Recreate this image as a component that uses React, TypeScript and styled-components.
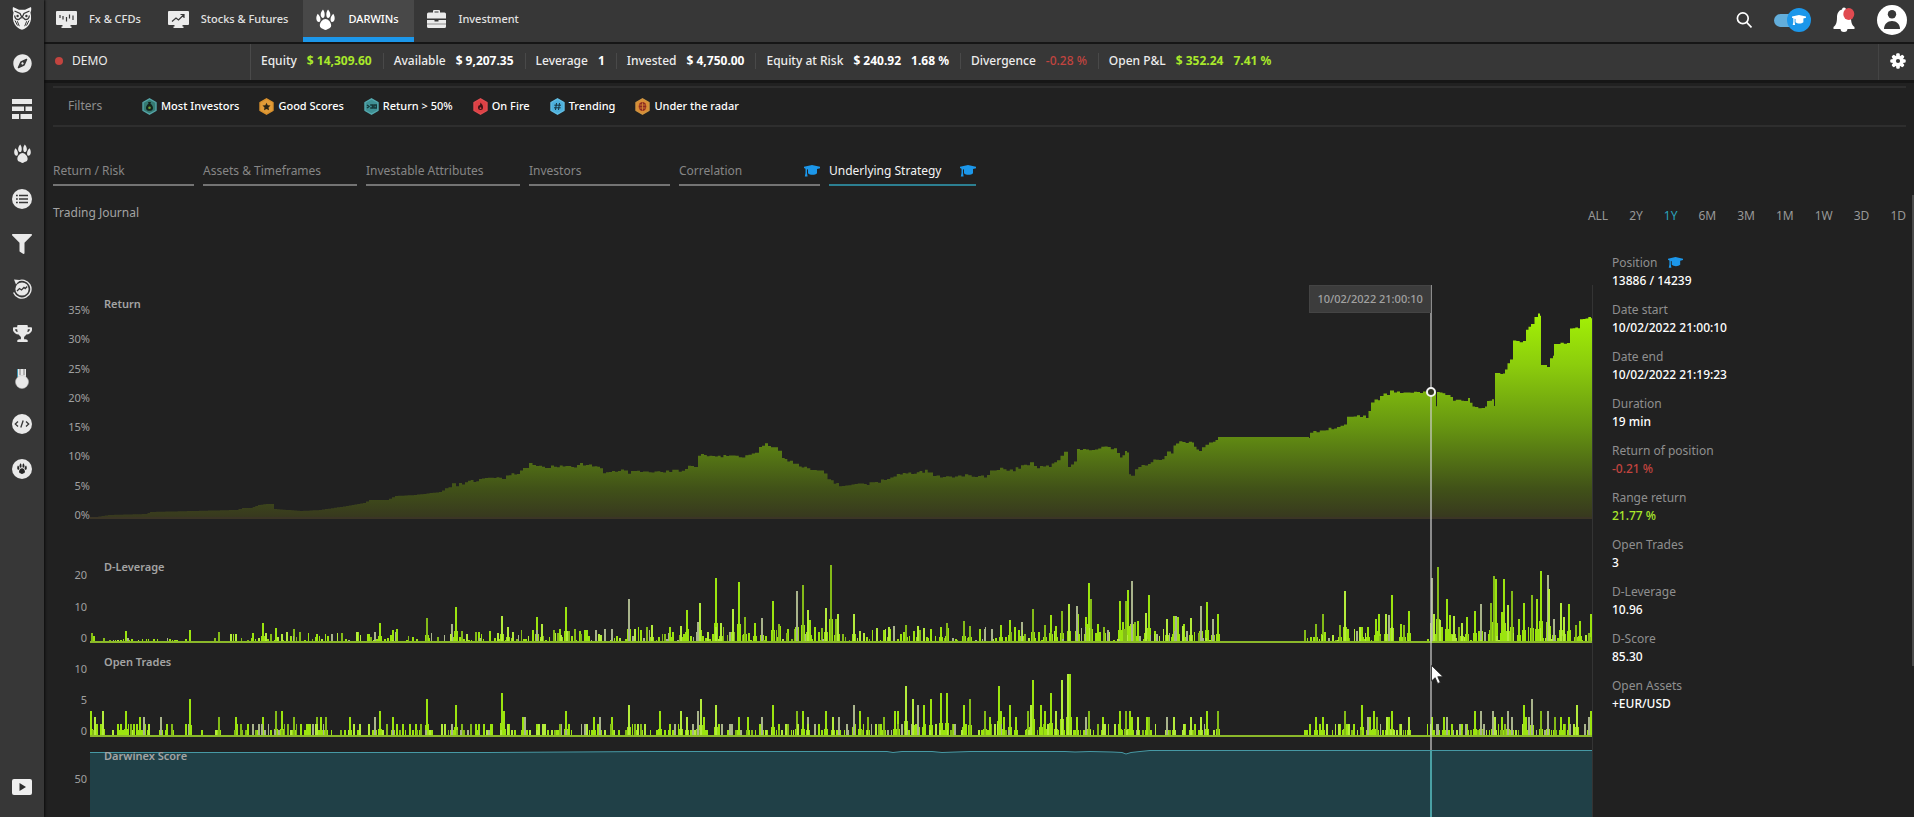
import React from "react";
import styled, { createGlobalStyle, css } from "styled-components";
import { FaCompass, FaFilter, FaTrophy } from "react-icons/fa";

const colors = {
  page: "#212121",
  bar: "#373737",
  edge: "#161616",
  rule: "#2e2e2e",
  text: "#ececec",
  muted: "#8e8e8e",
  green: "#a9e82b",
  red: "#c2443f",
  blue: "#1c97ea",
  teal: "#2ba3bd",
};

const GlobalStyle = createGlobalStyle`
  *, *::before, *::after { box-sizing: border-box; }
  body {
    margin: 0;
    background: ${colors.page};
    color: ${colors.text};
    font-family: "Noto Sans", "Open Sans", sans-serif;
    font-size: 12px;
    line-height: 16px;
  }
  button { font: inherit; color: inherit; background: none; border: 0; padding: 0; cursor: pointer; }
  a { color: inherit; text-decoration: none; }
  svg { display: block; }
`;

/* ---------- shell ---------- */

const Shell = styled.div`
  display: flex;
  height: 100vh;
  overflow: hidden;
`;

const Sidebar = styled.nav`
  display: flex;
  flex-direction: column;
  flex: none;
  width: 44px;
  background: ${colors.bar};
  box-shadow: 1px 0 2px #0c0c0c;
  z-index: 1;
`;

const Logo = styled.a`
  display: flex;
  justify-content: center;
  height: 41px;
  padding-top: 7px;
`;

const SideButton = styled.button<{ $last?: boolean }>`
  display: flex;
  align-items: center;
  justify-content: center;
  height: 45px;
  color: #e9e9e9;
  ${(p) => p.$last && css`margin-top: auto; margin-bottom: 8px;`}
`;

const Main = styled.div`
  display: flex;
  flex-direction: column;
  flex: 1;
  min-width: 0;
`;

/* ---------- top bar ---------- */

const TopBar = styled.header`
  display: flex;
  flex: none;
  height: 44px;
  background: ${colors.bar};
  border-bottom: 2px solid ${colors.edge};
`;

const TopTab = styled.button<{ $active?: boolean }>`
  display: flex;
  align-items: center;
  gap: 12px;
  padding: 0 15px 4px 12px;
  font-size: 11px;
  font-weight: 500;
  color: ${(p) => (p.$active ? "#fff" : "#e2e2e2")};
  ${(p) =>
    p.$active &&
    css`
      background: #484848;
      box-shadow: inset 0 -5px ${colors.blue};
    `}
`;

const Tools = styled.div`
  display: flex;
  align-items: center;
  gap: 22px;
  margin-left: auto;
  padding: 0 7px 2px 0;
`;

const IconButton = styled.button`
  display: flex;
`;

const LearnToggle = styled.label`
  position: relative;
  display: flex;
  align-items: center;
  width: 37px;
  height: 24px;
  cursor: pointer;
  &::before {
    content: "";
    width: 30px;
    height: 13px;
    border-radius: 7px;
    background: #63aedb;
  }
  input { position: absolute; inset: 0; margin: 0; opacity: 0; }
`;

const Knob = styled.span`
  position: absolute;
  right: 0;
  display: flex;
  align-items: center;
  justify-content: center;
  width: 24px;
  height: 24px;
  border-radius: 12px;
  background: ${colors.blue};
  color: #fff;
`;

/* ---------- account bar ---------- */

const AccountBar = styled.section`
  display: flex;
  align-items: center;
  flex: none;
  height: 39px;
  padding-bottom: 3px;
  background: ${colors.bar};
  border-bottom: 3px solid ${colors.edge};
`;

const Account = styled.div`
  display: flex;
  align-items: center;
  gap: 9px;
  align-self: stretch;
  width: 207px;
  margin-bottom: -3px;
  padding: 0 0 3px 11px;
  border-right: 1px solid #4a4a4a;
`;

const Dot = styled.span`
  width: 8px;
  height: 8px;
  border-radius: 4px;
  background: ${colors.red};
`;

type Tone = "plain" | "up" | "down";
const toneColor = { plain: "#fff", up: colors.green, down: colors.red };

const Stats = styled.dl`
  display: flex;
  margin: 0;
`;

const Stat = styled.div`
  display: flex;
  gap: 10px;
  padding: 0 11px 0 10px;
  & + & { border-left: 1px solid #494949; }
  dt { font-weight: 500; }
  dd { margin: 0; }
`;

const StatValue = styled.dd<{ $tone: Tone }>`
  font-weight: ${(p) => (p.$tone === "down" ? 500 : 700)};
  color: ${(p) => toneColor[p.$tone]};
`;

const SettingsBox = styled.div`
  display: flex;
  align-items: center;
  justify-content: center;
  align-self: stretch;
  width: 36px;
  margin: 0 0 -3px auto;
  padding: 0 0 3px 3px;
  border-left: 1px solid #444;
`;

/* ---------- filters and section tabs ---------- */

const Content = styled.main`
  position: relative;
  display: flex;
  flex-direction: column;
  flex: 1;
  min-height: 0;
  padding: 3px 8px 0 9px;
`;

const Scroll = styled.span`
  position: absolute;
  top: 112px;
  right: 0;
  width: 2px;
  height: 471px;
  background: #4a4a4a;
`;

const Filters = styled.section`
  display: flex;
  align-items: center;
  gap: 20px;
  flex: none;
  height: 41px;
  padding: 0 0 1px 15px;
  border: solid ${colors.rule};
  border-width: 2px 0;
`;

const FiltersLabel = styled.span`
  width: 54px;
  color: ${colors.muted};
`;

const Chip = styled.button`
  display: flex;
  align-items: center;
  gap: 4px;
  font-size: 11px;
  font-weight: 500;
  color: #fff;
`;

const SectionTabs = styled.nav`
  display: flex;
  gap: 9px;
  flex: none;
  margin-top: 34px;
`;

const SectionTab = styled.button<{ $active?: boolean; $wide?: boolean }>`
  display: flex;
  align-items: center;
  justify-content: space-between;
  width: ${(p) => (p.$active ? 147 : p.$wide ? 154 : 141)}px;
  height: 25px;
  padding-bottom: 3px;
  border-bottom: 2px solid ${(p) => (p.$active ? "#2c7f91" : "#747474")};
  color: ${(p) => (p.$active ? "#f4f4f4" : "#868686")};
  svg { color: ${colors.blue}; }
`;

const JournalHead = styled.div`
  display: flex;
  align-items: center;
  justify-content: space-between;
  flex: none;
  margin-top: 16px;
  height: 22px;
`;

const JournalTitle = styled.h2`
  margin: 0;
  font-size: 12px;
  font-weight: 400;
  color: #a3a3a3;
`;

const Ranges = styled.div`
  display: flex;
  gap: 21px;
  align-self: flex-end;
`;

const Range = styled.button<{ $active?: boolean }>`
  color: ${(p) => (p.$active ? colors.teal : "#989898")};
`;

/* ---------- journal body ---------- */

const Journal = styled.div`
  display: flex;
  flex: 1;
  min-height: 0;
  margin-top: 30px;
`;

const Charts = styled.div`
  position: relative;
  display: flex;
  flex-direction: column;
  flex: 1;
  min-width: 0;
  margin-top: 31px;
  border-right: 1px solid #343434;
`;

const Panel = styled.section<{ $height?: number }>`
  display: flex;
  ${(p) => (p.$height ? css`flex: none; height: ${p.$height}px;` : css`flex: 1; min-height: 60px;`)}
`;

const Axis = styled.div<{ $top: number; $bottom?: number; $inset?: number }>`
  display: flex;
  flex-direction: column;
  justify-content: space-between;
  align-items: flex-end;
  flex: none;
  width: 37px;
  padding: ${(p) => `${p.$top}px ${p.$inset ?? 3}px ${p.$bottom ?? 0}px 0`};
  font-size: 11px;
  line-height: 10px;
  color: #a0a0a0;
`;

const Plot = styled.div`
  position: relative;
  flex: 1;
  min-width: 0;
  svg { width: 100%; }
`;

const PlotTitle = styled.h3<{ $top: number }>`
  position: absolute;
  top: ${(p) => p.$top}px;
  left: 14px;
  margin: 0;
  font-size: 11px;
  font-weight: 600;
  line-height: 14px;
  color: #a4a4a4;
`;

const ScorePlot = styled(Plot)`
  display: flex;
  flex-direction: column;
  padding-top: 12px;
  &::after { content: ""; flex: 1; background: #204047; }
`;

const Overlay = styled.div`
  position: absolute;
  inset: 0 0 0 37px;
  pointer-events: none;
`;

const Crosshair = styled.div`
  position: absolute;
  top: 0;
  bottom: 0;
  left: 89.2%;
  width: 2px;
  background: linear-gradient(rgba(205, 205, 205, 0.62) 465px, #4aa0a4 465px);
`;

const Tooltip = styled.div`
  position: absolute;
  top: 0;
  right: 1px;
  padding: 5px 7px;
  background: #3c3c3c;
  border: 1px solid #444;
  line-height: 16px;
  font-size: 11px;
  font-weight: 500;
  white-space: nowrap;
  color: #a2a2a2;
`;

const Marker = styled.span`
  position: absolute;
  top: 102px;
  left: -4px;
  width: 10px;
  height: 10px;
  border: 2px solid #f4f4f4;
  border-radius: 5px;
  background: #30341f;
`;

const Cursor = styled.svg`
  position: absolute;
  top: 380px;
  left: 1px;
`;

const Details = styled.dl`
  flex: none;
  width: 313px;
  margin: 0;
  padding-left: 19px;
`;

const Detail = styled.div`
  height: 47px;
  dt { display: flex; align-items: center; gap: 11px; height: 18px; color: #8f8f8f; }
  dt svg { color: ${colors.blue}; }
  dd { margin: 0; height: 18px; line-height: 18px; }
`;

const DetailValue = styled.dd<{ $tone: Tone }>`
  font-weight: 500;
  color: ${(p) => toneColor[p.$tone]};
`;

/* ---------- icons ---------- */

const OwlLogo = () => (
  <svg width="20" height="23" viewBox="0 0 20 23">
    <path fill="#f1f1f1" d="M1 0l6 2.800h6L19 0c.5 2 .3 4-.6 5.500 1.200 4.500.9 8.500-1.200 12-1.600 2.600-4.200 4.500-7.200 5.300-3-.8-5.600-2.700-7.200-5.300C.7 14 .4 10 1.600 5.500.7 4 .5 2 1 0z" />
    <path fill="none" stroke="#373737" strokeWidth="1.300" d="M2.500 4l5.500 2.500 2 4 2-4L17.500 4M2.600 8.500c.4 3.500 2.400 4.500 4.600 3.800L9 10.500M17.400 8.500c-.4 3.500-2.400 4.500-4.600 3.800L11 10.500" />
    <path fill="none" stroke="#373737" strokeWidth="1" d="M3 13.500l2.500 5M5.300 14.200l2 5M17 13.500l-2.500 5M14.700 14.200l-2 5" />
    <circle cx="5.600" cy="9" r="1.200" fill="#373737" />
    <circle cx="14.400" cy="9" r="1.200" fill="#373737" />
  </svg>
);

const CapIcon = ({ size = 16 }: { size?: number }) => (
  <svg width={size} height={(size * 3) / 4} viewBox="0 0 16 12">
    <path fill="currentColor" d="M8 0l8 1.800v1.400L13 4v4.300c-2 2-7 2-9 0V4.600L3 4.300V8l.6 3.500H.8L1.500 8V3.800L0 3V1.800z" />
  </svg>
);

const GearIcon = () => (
  <svg width="16" height="16" viewBox="0 0 16 16">
    <g fill="#fff">
      {[0, 45, 90, 135].map((angle) => (
        <rect key={angle} x="6.200" y="0.300" width="3.600" height="15.400" rx="1.200" transform={`rotate(${angle} 8 8)`} />
      ))}
      <circle cx="8" cy="8" r="5.800" />
    </g>
    <circle cx="8" cy="8" r="2.100" fill="#373737" />
  </svg>
);

const BricksIcon = () => (
  <svg width="20" height="20" viewBox="0 0 20 20" fill="currentColor">
    <path d="M0 0h20v5H0zM0 7.500h12V12H0zM13.500 7.500H20V12h-6.500zM0 15h7v5H0zM8.500 15H20v5H8.500z" />
  </svg>
);

const pawShape =
  "M10 9.500c2.600 0 5.400 3.300 5.400 6.200 0 1.700-1.200 2.600-2.600 3-.9.300-1.700 1.200-2.800 1.200s-1.900-.9-2.800-1.200c-1.400-.4-2.600-1.300-2.600-3 0-2.900 2.800-6.200 5.400-6.200zM7.600.5c1.200 1.600 1.700 3.200 1.600 5.200C9.100 7.400 8.500 8.500 7.500 8.500S5.400 7.300 5.400 5.500c0-2 .9-3.500 2.200-5zM12.400.5c1.300 1.500 2.200 3 2.200 5 0 1.800-1.100 3-2.100 3s-1.600-1.100-1.700-2.800c-.1-2 .4-3.600 1.600-5.200zM2.600 4.500c1.500 1.500 2.500 3 2.600 5 .1 1.700-.4 2.700-1.300 2.900-1.200.2-2.400-1.100-2.600-2.900-.2-1.900.3-3.500 1.300-5zM17.400 4.500c1 1.500 1.500 3.100 1.300 5-.2 1.800-1.400 3.100-2.600 2.900-.9-.2-1.400-1.200-1.300-2.900.1-2 1.100-3.500 2.600-5z";

const PawIcon = ({ size = 20 }: { size?: number }) => (
  <svg width={size} height={size} viewBox="0 0 20 20">
    <path fill="currentColor" d={pawShape} />
  </svg>
);

const ListIcon = () => (
  <svg width="20" height="20" viewBox="0 0 20 20">
    <circle cx="10" cy="10" r="10" fill="currentColor" />
    <path stroke="#373737" strokeWidth="1.400" d="M4 6.500h1.800M7 6.500h9M4 10h1.800M7 10h9M4 13.500h1.800M7 13.500h9" />
  </svg>
);

const HistoryChartIcon = () => (
  <svg width="20" height="20" viewBox="0 0 20 20">
    <circle cx="10" cy="10" r="6.600" fill="currentColor" />
    <path fill="none" stroke="currentColor" strokeWidth="1.400" d="M5 2.600A9 9 0 1 1 1.600 13.500" />
    <path fill="currentColor" d="M2 .5l5.500.5-3.500 4.500z" />
    <path fill="none" stroke="#373737" strokeWidth="1.300" d="M5 12l2.500-2.500 2 1.500L12 8.500l1.200 1 2-2" />
  </svg>
);

const MedalIcon = () => (
  <svg width="14" height="20" viewBox="0 0 14 20">
    <path fill="#3d98b5" d="M2 0h1.500v8H2z" />
    <path fill="currentColor" d="M3 0h8v8H3z" />
    <path stroke="#7d7d7d" d="M5 0v6M9 0v6" />
    <circle cx="7" cy="13" r="6.500" fill="currentColor" stroke="#bdbdbd" strokeWidth=".5" />
  </svg>
);

const CodeIcon = () => (
  <svg width="20" height="20" viewBox="0 0 20 20">
    <circle cx="10" cy="10" r="10" fill="currentColor" />
    <path fill="none" stroke="#373737" strokeWidth="1.300" d="M6 7.500L3.300 10 6 12.500M14 7.500l2.700 2.500-2.700 2.500M11.200 6.500l-2.400 7" />
  </svg>
);

const PawBadgeIcon = () => (
  <svg width="20" height="20" viewBox="0 0 20 20">
    <circle cx="10" cy="10" r="10" fill="currentColor" />
    <path fill="#262626" transform="translate(4.500 4) scale(.55)" d={pawShape} />
  </svg>
);

const PlayIcon = () => (
  <svg width="20" height="16" viewBox="0 0 20 16">
    <rect width="20" height="16" rx="2" fill="#efefef" />
    <path fill="#2e2e2e" d="M7.500 4l6.500 4-6.500 4z" />
  </svg>
);

const MonitorFrame = ({ children }: { children: React.ReactNode }) => (
  <svg width="21" height="17" viewBox="0 0 21 17">
    <path fill="#ebebeb" d="M1 0h19a1 1 0 0 1 1 1v12a1 1 0 0 1-1 1h-5.500v1.600h1V17h-10v-1.400h1V14H1a1 1 0 0 1-1-1V1a1 1 0 0 1 1-1z" />
    {children}
  </svg>
);

const FxIcon = () => (
  <MonitorFrame>
    <path stroke="#373737" strokeWidth="1.200" d="M4 4v3M7 5v3.500M10.500 6v4.500M13.500 3.500v4M17 4.500v4.500" />
  </MonitorFrame>
);

const StocksIcon = () => (
  <MonitorFrame>
    <path fill="none" stroke="#373737" strokeWidth="1.200" d="M4 10.500l4-3.500 2.500 2L15.500 4M12.500 3.500h3.500V7" />
  </MonitorFrame>
);

const BriefcaseIcon = () => (
  <svg width="21" height="18" viewBox="0 0 21 18">
    <path fill="#ebebeb" d="M7 2.500V1a1 1 0 0 1 1-1h5a1 1 0 0 1 1 1v1.500h4.500A1.500 1.500 0 0 1 20 4v4.500H1V4a1.500 1.500 0 0 1 1.500-1.500zm1.500 0h4v-1h-4zM1 10h7.500v1.500h4V10H20v6.500a1.500 1.500 0 0 1-1.500 1.500h-16A1.500 1.500 0 0 1 1 16.500z" />
    <path stroke="#8d8d8d" d="M1 14h19" />
  </svg>
);

const SearchIcon = () => (
  <svg width="16" height="16" viewBox="0 0 16 16" fill="none" stroke="#fff" strokeWidth="1.700">
    <circle cx="6.800" cy="6.300" r="5.400" />
    <path d="M10.500 10.200l5 5.200" />
  </svg>
);

const BellIcon = () => (
  <svg width="22" height="26" viewBox="0 0 22 26">
    <path fill="#fff" d="M9 2.500a2 2 0 0 1 4 0c3.500 1 5 4 5 8 0 5 1 7.500 3.500 9.500v2h-21v-2C3 18 4 15.500 4 10.500c0-4 1.500-7 5-8zM7.500 21.500h7a3.500 3.500 0 0 1-7 0z" />
    <ellipse cx="15.800" cy="7" rx="5.500" ry="6" fill="#e04a50" />
  </svg>
);

const AvatarIcon = () => (
  <svg width="30" height="30" viewBox="0 0 30 30">
    <circle cx="15" cy="15" r="15" fill="#fff" />
    <circle cx="15" cy="9.200" r="4.200" fill="#373737" />
    <path fill="#373737" d="M7 24c0-5 3.500-8 8-8s8 3 8 8z" />
  </svg>
);

const Hex = ({ fill, rim, children }: { fill: string; rim: string; children: React.ReactNode }) => (
  <svg width="15" height="17" viewBox="0 0 15 17">
    <path d="M7.500.8l6.500 3.700v8L7.500 16.200 1 12.500v-8z" fill={fill} stroke={rim} strokeWidth="1.400" strokeLinejoin="round" />
    {children}
  </svg>
);

const chips = [
  {
    label: "Most Investors",
    icon: (
      <Hex fill="#357a72" rim="#55a5a8">
        <path fill="#14231c" d="M6 4h3l-.6 1.600C10.500 7 11 9 11 10.200c0 1.600-1.500 2.600-3.500 2.600S4 11.800 4 10.200C4 9 4.500 7 6.600 5.600z" />
        <circle cx="7.500" cy="9.700" r="1.300" fill="#6f9f35" />
      </Hex>
    ),
  },
  {
    label: "Good Scores",
    icon: (
      <Hex fill="#e09b38" rim="#d8902c">
        <path fill="#2a2416" d="M7.500 4.700l1.200 2.500 2.800.4-2 1.900.5 2.800-2.500-1.300-2.500 1.300.5-2.800-2-1.900 2.800-.4z" />
      </Hex>
    ),
  },
  {
    label: "Return > 50%",
    icon: (
      <Hex fill="#3f9094" rim="#55aab0">
        <path fill="none" stroke="#16383a" strokeWidth="1.400" d="M3 7l2 1.500L3 10M6.200 7h2.300v3H6.200M10 7h2.300v3H10z" />
      </Hex>
    ),
  },
  {
    label: "On Fire",
    icon: (
      <Hex fill="#dd4145" rim="#e04c50">
        <path fill="#3a1416" d="M7.500 4.500c2 2 2.500 3.300 2.500 5a2.500 2.500 0 0 1-5 0c0-1 .5-1.800 1.200-2.400.4.900.8.900 1.300-2.600z" />
        <circle cx="7.500" cy="10.200" r=".9" fill="#dd4145" />
      </Hex>
    ),
  },
  {
    label: "Trending",
    icon: (
      <Hex fill="#4db0dc" rim="#62bde3">
        <path stroke="#17323e" d="M6.500 5l-1 7M9.500 5l-1 7M4.300 7.200h6.700M4 9.800h6.700" />
      </Hex>
    ),
  },
  {
    label: "Under the radar",
    icon: (
      <Hex fill="#d98c35" rim="#cf9440">
        <ellipse cx="7.500" cy="8.500" rx="3.800" ry="4.500" fill="#8e2b22" />
        <path stroke="#d98c35" strokeWidth=".8" d="M7.500 4.500v8M4.500 7h6M4.500 10h6" />
      </Hex>
    ),
  },
];

/* ---------- chart data ---------- */

const PLOT_W = 1502;
const PLOT_X = 90;

const makeRandom = (seed: number) => () => {
  seed = (seed * 1664525 + 1013904223) % 4294967296;
  return seed / 4294967296;
};

// Return curve: horizontal position, vertical position
const returnCurve = [
  90, 519, 95, 517, 108, 515, 145, 514, 150, 512, 190, 511, 235, 510, 242, 508, 250, 508, 258, 505, 266, 504, 272, 504,
  274, 509, 300, 511, 319, 510, 346, 506, 363, 503, 369, 500, 386, 500, 395, 496, 414, 495, 439, 492, 445, 489, 452, 483,
  456, 485, 468, 482, 479, 479, 491, 477, 502, 478, 506, 476, 517, 473, 523, 469, 529, 464, 536, 466, 542, 468, 557, 466,
  574, 467, 580, 464, 592, 465, 600, 469, 603, 472, 618, 472, 624, 470, 628, 473, 637, 470, 643, 472, 666, 471, 685, 470,
  688, 467, 694, 466, 698, 455, 704, 455, 715, 457, 729, 455, 742, 458, 755, 452, 759, 446, 765, 444, 771, 447, 778, 450,
  782, 457, 790, 462, 799, 465, 807, 469, 820, 469, 824, 475, 831, 481, 839, 485, 864, 485, 875, 482, 887, 479, 900, 474,
  914, 473, 925, 471, 933, 475, 940, 477, 958, 477, 965, 474, 975, 477, 984, 476, 990, 472, 1000, 469, 1013, 470,
  1021, 466, 1030, 463, 1034, 467, 1049, 467, 1057, 459, 1064, 453, 1068, 466, 1074, 463, 1077, 449, 1089, 450,
  1095, 448, 1114, 448, 1117, 452, 1120, 457, 1125, 452, 1127, 452, 1129, 475, 1131, 477, 1135, 468, 1148, 463,
  1156, 460, 1162, 458, 1167, 452, 1171, 452, 1176, 442, 1192, 442, 1194, 446, 1199, 451, 1202, 448, 1209, 443,
  1213, 442, 1218, 437, 1309, 437, 1310, 433, 1323, 430, 1337, 427, 1344, 425, 1347, 418, 1357, 416, 1366, 417,
  1371, 402, 1378, 400, 1380, 395, 1387, 394, 1390, 391, 1394, 393, 1400, 392, 1407, 394, 1414, 392, 1435, 392,
  1436, 406, 1437, 393, 1448, 394, 1453, 401, 1464, 400, 1468, 397, 1470, 402, 1475, 408, 1485, 407, 1487, 402,
  1492, 398, 1494, 407, 1495, 373, 1503, 375, 1505, 370, 1510, 358, 1513, 342, 1523, 341, 1526, 330, 1531, 323,
  1538, 313, 1540, 315, 1541, 365, 1547, 368, 1550, 357, 1553, 355, 1554, 345, 1567, 342, 1570, 330, 1578, 327,
  1580, 320, 1591, 318, 1592, 318,
];

const buildReturnPath = () => {
  const rnd = makeRandom(7);
  let d = "M0 234";
  for (let i = 0; i + 3 < returnCurve.length; i += 2) {
    const [x0, y0, x1, y1] = returnCurve.slice(i, i + 4);
    const steps = Math.max(1, Math.round((x1 - x0) / 3));
    for (let s = 0; s < steps; s++) {
      const x = x0 + ((x1 - x0) * s) / steps - PLOT_X;
      const calm = x0 < 440 || (y0 === y1 && x1 - x0 > 60);
      const y = y0 + ((y1 - y0) * s) / steps - 285 + (calm ? 0 : (rnd() - 0.5) * 3);
      d += `H${x.toFixed(1)}V${y.toFixed(1)}`;
    }
  }
  return d + `H${PLOT_W}V234Z`;
};

// Leverage peaks: horizontal position, height
const leveragePeaks = [
  91, 9, 93, 6, 125, 11, 189, 12, 218, 10, 235, 8, 252, 9, 262, 19, 265, 9, 275, 14, 281, 8, 293, 13, 299, 10, 316, 8,
  356, 10, 368, 8, 374, 10, 379, 19, 392, 12, 396, 13, 426, 24, 451, 18, 455, 35, 461, 11, 478, 10, 489, 11, 501, 26,
  507, 15, 512, 10, 536, 25, 541, 18, 553, 12, 559, 13, 565, 35, 579, 11, 586, 12, 595, 12, 604, 13, 611, 13, 628, 43,
  634, 13, 651, 17, 669, 15, 680, 16, 686, 32, 697, 20, 699, 39, 715, 64, 720, 19, 732, 33, 738, 60, 744, 25, 754, 19,
  761, 24, 772, 41, 778, 18, 787, 13, 796, 51, 802, 57, 807, 32, 809, 22, 821, 14, 825, 34, 830, 77, 835, 23, 837, 28,
  853, 28, 859, 11, 883, 12, 888, 15, 905, 17, 917, 16, 923, 14, 930, 13, 940, 15, 946, 19, 963, 21, 969, 16, 984, 13,
  1000, 17, 1009, 22, 1021, 20, 1032, 33, 1044, 17, 1050, 27, 1055, 16, 1061, 31, 1068, 38, 1076, 36, 1077, 28,
  1085, 25, 1088, 59, 1090, 43, 1097, 18, 1119, 41, 1122, 20, 1125, 41, 1127, 52, 1131, 61, 1134, 20, 1137, 21,
  1145, 29, 1148, 47, 1154, 11, 1166, 23, 1173, 26, 1175, 26, 1177, 25, 1183, 18, 1190, 24, 1200, 36, 1206, 40,
  1212, 23, 1217, 28, 1304, 12, 1315, 18, 1322, 28, 1339, 17, 1344, 51, 1347, 13, 1361, 15, 1367, 15, 1375, 23,
  1378, 28, 1385, 28, 1388, 27, 1391, 47, 1400, 18, 1403, 17, 1408, 31, 1431, 64, 1433, 28, 1437, 75, 1439, 22,
  1446, 43, 1449, 27, 1453, 26, 1461, 19, 1466, 25, 1474, 31, 1480, 38, 1490, 39, 1493, 66, 1495, 63, 1501, 30,
  1503, 63, 1507, 37, 1511, 51, 1518, 23, 1523, 39, 1531, 47, 1536, 43, 1540, 71, 1547, 67, 1548, 53, 1553, 23,
  1560, 39, 1563, 25, 1568, 38, 1575, 17, 1579, 21, 1588, 9, 1590, 28,
];

// Open trades peaks: horizontal position, number of trades
const tradePeaks = [
  90, 4, 94, 3, 102, 4, 117, 2, 125, 4, 133, 2, 139, 3, 143, 3, 148, 2, 160, 3, 166, 2, 171, 2, 185, 2, 189, 6, 218, 3,
  235, 3, 240, 2, 252, 2, 258, 2, 262, 3, 275, 4, 281, 4, 287, 2, 293, 3, 306, 2, 312, 2, 316, 3, 320, 3, 325, 3,
  349, 3, 368, 2, 374, 3, 379, 4, 392, 3, 396, 2, 415, 2, 420, 2, 426, 6, 444, 2, 451, 2, 455, 5, 461, 2, 470, 2,
  478, 2, 483, 2, 490, 2, 501, 7, 503, 4, 507, 2, 522, 3, 524, 3, 536, 2, 543, 2, 559, 2, 565, 4, 586, 2, 593, 3,
  599, 3, 611, 3, 628, 5, 634, 2, 644, 2, 659, 4, 669, 2, 674, 2, 680, 4, 686, 3, 692, 2, 697, 4, 700, 6, 703, 3,
  715, 5, 729, 2, 738, 3, 747, 3, 761, 3, 772, 5, 778, 2, 796, 4, 802, 4, 807, 3, 825, 4, 832, 3, 838, 3, 846, 2,
  853, 5, 859, 4, 867, 3, 875, 2, 883, 3, 894, 4, 897, 4, 905, 8, 912, 6, 917, 5, 923, 5, 930, 6, 940, 7, 946, 7,
  952, 2, 963, 5, 969, 6, 984, 4, 989, 3, 998, 8, 1000, 4, 1003, 3, 1009, 5, 1015, 3, 1027, 4, 1030, 5, 1032, 9,
  1040, 5, 1044, 4, 1050, 7, 1055, 4, 1061, 9, 1067, 10, 1069, 10, 1076, 3, 1085, 3, 1088, 4, 1097, 2, 1102, 3,
  1114, 2, 1119, 4, 1125, 4, 1129, 4, 1131, 3, 1137, 3, 1146, 3, 1148, 3, 1166, 3, 1173, 3, 1183, 2, 1190, 3,
  1194, 2, 1200, 3, 1206, 4, 1217, 4, 1304, 1, 1309, 2, 1315, 3, 1322, 3, 1339, 2, 1344, 4, 1346, 2, 1361, 5,
  1367, 3, 1369, 3, 1373, 4, 1376, 3, 1386, 3, 1388, 3, 1391, 4, 1400, 2, 1408, 3, 1431, 3, 1437, 2, 1443, 3,
  1446, 3, 1451, 2, 1461, 2, 1466, 2, 1474, 4, 1480, 4, 1483, 2, 1492, 4, 1494, 3, 1501, 3, 1507, 4, 1511, 3,
  1523, 5, 1525, 3, 1528, 3, 1531, 6, 1540, 4, 1547, 4, 1554, 3, 1560, 3, 1568, 3, 1573, 2, 1576, 5, 1588, 3, 1590, 4,
];

const barColors = ["#9be40f", "#84bb18", "#a9b48c", "#b4ec3c"];

const buildBars = (peaks: number[], unit: number, base: number, seed: number, floor: (x: number, r: number) => number) => {
  const rnd = makeRandom(seed);
  const paths = barColors.map(() => "");
  const add = (x: number, h: number, w: number) => {
    const r = rnd();
    const tone = r < 0.5 ? 0 : r < 0.68 ? 1 : r < 0.8 ? 2 : 3;
    paths[tone] += `M${x - PLOT_X} ${base}v${-Math.round(h)}h${w}V${base}z`;
  };
  for (let x = 92; x < 1590; x += 2 + Math.floor(rnd() * 3)) {
    const quiet = (x > 1217 && x < 1304) || (x > 1409 && x < 1426) || (x > 190 && x < 233 && rnd() > 0.25);
    const h = floor(x, rnd());
    if (!quiet && h > 0) add(x, h, rnd() < 0.4 ? 1 : 2);
  }
  for (let i = 0; i < peaks.length; i += 2) {
    const h = peaks[i + 1] * unit;
    add(peaks[i], h, 2);
    if (h > 14) paths[0] += `M${peaks[i] - PLOT_X - 1} ${base}v${-Math.round(h * 0.3)}h4V${base}z`;
  }
  return paths;
};

const leverageBars = buildBars(leveragePeaks, 1, 97, 21, (x, r) => {
  const cap = x < 230 ? 3 : x < 440 ? 9 : x < 620 ? 12 : 15;
  return r * r * cap + 1;
});

const tradeBars = buildBars(tradePeaks, 6.2, 93, 58, (x, r) => {
  const busy = x < 230 ? 0.45 : 0.75;
  return r > busy ? 0 : r < 0.25 ? 12 : 6;
});

const Bars = ({ paths, height }: { paths: string[]; height: number }) => (
  <svg height={height} viewBox={`0 0 ${PLOT_W} ${height}`} preserveAspectRatio="none" shapeRendering="crispEdges">
    {paths.map((d, i) => (
      <path key={barColors[i]} d={d} fill={barColors[i]} />
    ))}
    <path d={`M0 ${height - 2}h${PLOT_W}v2H0z`} fill="#8bb82a" />
  </svg>
);

const returnPath = buildReturnPath();

/* ---------- page data ---------- */

const sideItems = [
  ["Explore", <FaCompass size={19} />],
  ["Portfolio", <BricksIcon />],
  ["Darwins", <PawIcon size={19} />],
  ["Lists", <ListIcon />],
  ["Filter", <FaFilter size={20} />],
  ["History", <HistoryChartIcon />],
  ["Ranking", <FaTrophy size={19} />],
  ["Awards", <MedalIcon />],
  ["API", <CodeIcon />],
  ["Community", <PawBadgeIcon />],
] as const;

const topTabs = [
  { label: "Fx & CFDs", icon: <FxIcon /> },
  { label: "Stocks & Futures", icon: <StocksIcon /> },
  { label: "DARWINs", icon: <PawIcon size={21} />, active: true },
  { label: "Investment", icon: <BriefcaseIcon /> },
];

const stats: { label: string; values: string[]; tone: Tone }[] = [
  { label: "Equity", values: ["$ 14,309.60"], tone: "up" },
  { label: "Available", values: ["$ 9,207.35"], tone: "plain" },
  { label: "Leverage", values: ["1"], tone: "plain" },
  { label: "Invested", values: ["$ 4,750.00"], tone: "plain" },
  { label: "Equity at Risk", values: ["$ 240.92", "1.68 %"], tone: "plain" },
  { label: "Divergence", values: ["-0.28 %"], tone: "down" },
  { label: "Open P&L", values: ["$ 352.24", "7.41 %"], tone: "up" },
];

const sectionTabs = [
  { label: "Return / Risk" },
  { label: "Assets & Timeframes", wide: true },
  { label: "Investable Attributes", wide: true },
  { label: "Investors" },
  { label: "Correlation", learn: true },
  { label: "Underlying Strategy", learn: true, active: true },
];

const ranges = ["ALL", "2Y", "1Y", "6M", "3M", "1M", "1W", "3D", "1D"];

const details: { label: string; value: string; tone?: Tone; learn?: boolean }[] = [
  { label: "Position", value: "13886 / 14239", learn: true },
  { label: "Date start", value: "10/02/2022 21:00:10" },
  { label: "Date end", value: "10/02/2022 21:19:23" },
  { label: "Duration", value: "19 min" },
  { label: "Return of position", value: "-0.21 %", tone: "down" },
  { label: "Range return", value: "21.77 %", tone: "up" },
  { label: "Open Trades", value: "3" },
  { label: "D-Leverage", value: "10.96" },
  { label: "D-Score", value: "85.30" },
  { label: "Open Assets", value: "+EUR/USD" },
];

export default function App() {
  return (
    <>
      <GlobalStyle />
      <Shell>
        <Sidebar aria-label="Main">
          <Logo href="#" aria-label="Home">
            <OwlLogo />
          </Logo>
          {sideItems.map(([label, icon]) => (
            <SideButton key={label} aria-label={label}>
              {icon}
            </SideButton>
          ))}
          <SideButton $last aria-label="Videos">
            <PlayIcon />
          </SideButton>
        </Sidebar>

        <Main>
          <TopBar>
            {topTabs.map((tab) => (
              <TopTab key={tab.label} $active={tab.active}>
                {tab.icon}
                {tab.label}
              </TopTab>
            ))}
            <Tools>
              <IconButton aria-label="Search">
                <SearchIcon />
              </IconButton>
              <LearnToggle>
                <input type="checkbox" defaultChecked aria-label="Learning mode" />
                <Knob>
                  <CapIcon size={14} />
                </Knob>
              </LearnToggle>
              <IconButton aria-label="Notifications">
                <BellIcon />
              </IconButton>
              <IconButton aria-label="Profile">
                <AvatarIcon />
              </IconButton>
            </Tools>
          </TopBar>

          <AccountBar>
            <Account>
              <Dot />
              DEMO
            </Account>
            <Stats>
              {stats.map((s) => (
                <Stat key={s.label}>
                  <dt>{s.label}</dt>
                  {s.values.map((v) => (
                    <StatValue key={v} $tone={s.tone}>
                      {v}
                    </StatValue>
                  ))}
                </Stat>
              ))}
            </Stats>
            <SettingsBox>
              <IconButton aria-label="Settings">
                <GearIcon />
              </IconButton>
            </SettingsBox>
          </AccountBar>

          <Content>
            <Filters>
              <FiltersLabel>Filters</FiltersLabel>
              {chips.map((chip) => (
                <Chip key={chip.label}>
                  {chip.icon}
                  {chip.label}
                </Chip>
              ))}
            </Filters>

            <SectionTabs aria-label="Analysis">
              {sectionTabs.map((tab) => (
                <SectionTab key={tab.label} $active={tab.active} $wide={tab.wide}>
                  {tab.label}
                  {tab.learn && <CapIcon />}
                </SectionTab>
              ))}
            </SectionTabs>

            <JournalHead>
              <JournalTitle>Trading Journal</JournalTitle>
              <Ranges>
                {ranges.map((r) => (
                  <Range key={r} $active={r === "1Y"}>
                    {r}
                  </Range>
                ))}
              </Ranges>
            </JournalHead>

            <Journal>
              <Charts>
                <Panel $height={260}>
                  <Axis $top={20} $bottom={25} $inset={0}>
                    {["35%", "30%", "25%", "20%", "15%", "10%", "5%", "0%"].map((t) => (
                      <span key={t}>{t}</span>
                    ))}
                  </Axis>
                  <Plot>
                    <svg height="234" viewBox={`0 0 ${PLOT_W} 234`} preserveAspectRatio="none">
                      <defs>
                        <linearGradient id="returnFill" gradientUnits="userSpaceOnUse" x1="0" y1="28" x2="0" y2="234">
                          <stop offset="0" stopColor="#a4f205" />
                          <stop offset="0.25" stopColor="#8ccd0c" />
                          <stop offset="0.55" stopColor="#679611" />
                          <stop offset="0.85" stopColor="#415218" />
                          <stop offset="1" stopColor="#37371f" />
                        </linearGradient>
                      </defs>
                      <path d={returnPath} fill="url(#returnFill)" />
                      <path d={`M0 232h${PLOT_W}v2H0z`} fill="#3b3526" />
                    </svg>
                    <PlotTitle $top={12}>Return</PlotTitle>
                  </Plot>
                </Panel>

                <Panel $height={98}>
                  <Axis $top={25}>
                    <span>20</span>
                    <span>10</span>
                    <span>0</span>
                  </Axis>
                  <Plot>
                    <Bars paths={leverageBars} height={98} />
                    <PlotTitle $top={15}>D-Leverage</PlotTitle>
                  </Plot>
                </Panel>

                <Panel $height={94}>
                  <Axis $top={21} $bottom={1}>
                    <span>10</span>
                    <span>5</span>
                    <span>0</span>
                  </Axis>
                  <Plot>
                    <Bars paths={tradeBars} height={94} />
                    <PlotTitle $top={12}>Open Trades</PlotTitle>
                  </Plot>
                </Panel>

                <Panel>
                  <Axis $top={37}>
                    <span>50</span>
                  </Axis>
                  <ScorePlot>
                    <svg height="6" viewBox={`0 0 ${PLOT_W} 6`} preserveAspectRatio="none">
                      <path
                        fill="#204047"
                        stroke="#4699a5"
                        d="M-2 8V3.500H400L560 2.500H797L803 3.500 812 2.500H842L852 3.500 880 2.500H975L985 3 1000 2.500 1022 3 1032 3.500 1036 5 1041 3.500 1050 2.500 1060 1.500H1504V8z"
                      />
                    </svg>
                    <PlotTitle $top={12}>Darwinex Score</PlotTitle>
                  </ScorePlot>
                </Panel>

                <Overlay>
                  <Crosshair>
                    <Tooltip>10/02/2022 21:00:10</Tooltip>
                    <Marker />
                    <Cursor width="14" height="20" viewBox="0 0 14 20">
                      <path d="M.5.500v15.500l3.700-3.300 2.500 5.800 2.600-1.100-2.500-5.700h5.200z" fill="#fff" stroke="#222" strokeWidth=".8" />
                    </Cursor>
                  </Crosshair>
                </Overlay>
              </Charts>

              <Details>
                {details.map((d) => (
                  <Detail key={d.label}>
                    <dt>
                      {d.label}
                      {d.learn && <CapIcon size={15} />}
                    </dt>
                    <DetailValue $tone={d.tone ?? "plain"}>{d.value}</DetailValue>
                  </Detail>
                ))}
              </Details>
            </Journal>
            <Scroll />
          </Content>
        </Main>
      </Shell>
    </>
  );
}
